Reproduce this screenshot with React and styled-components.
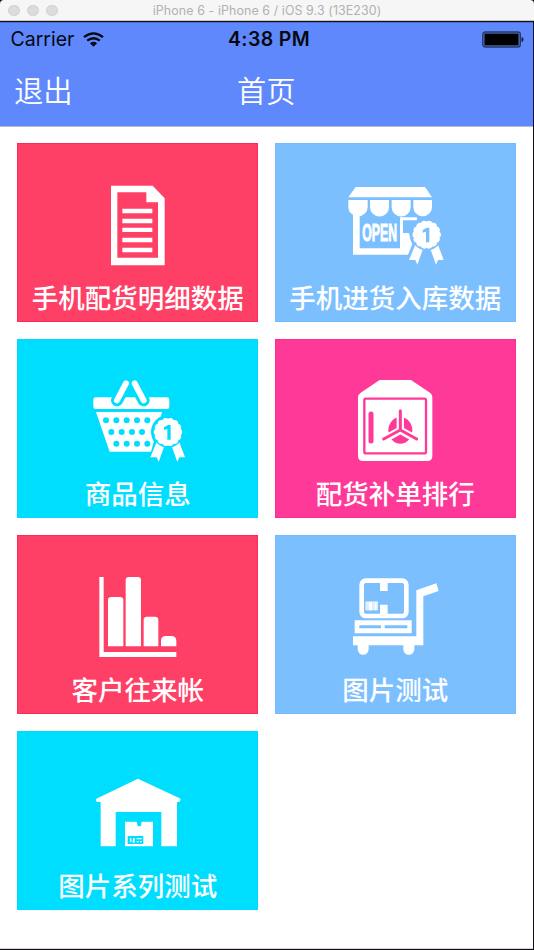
import React from "react";
import styled, { createGlobalStyle } from "styled-components";

const GlobalStyle = createGlobalStyle`
  * { box-sizing: border-box; }
  body { margin: 0; background: #fff; }
`;

const COLORS = {
  red: { fill: "#ff4066", edge: "#ff2a5c" },
  sky: { fill: "#7cbfff", edge: "#74baff" },
  cyan: { fill: "#00deff", edge: "#00daff" },
  pink: { fill: "#ff3998", edge: "#ff2c92" },
};

const Simulator = styled.div`
  display: flex;
  flex-direction: column;
  width: 534px;
  height: 950px;
  overflow: hidden;
  background: #15101c;
  font-family: Inter, "Noto Sans CJK SC", sans-serif;
`;

const WindowBar = styled.header`
  display: grid;
  grid-template-columns: 1fr auto 1fr;
  align-items: center;
  height: 21px;
  flex: none;
  padding: 0 8px;
  background: #f6f6f6;
  border-bottom: 1px solid #c4c4c4;
  border-radius: 4px 4px 0 0;
`;

const WindowButtons = styled.div`
  display: flex;
  gap: 7.5px;
`;

const WindowButton = styled.span`
  width: 11.5px;
  height: 11.5px;
  border-radius: 50%;
  background: #dcdcdc;
  border: 1px solid #d0d0d0;
`;

const WindowTitle = styled.span`
  font-size: 12.4px;
  line-height: 20px;
  padding-top: 1px;
  letter-spacing: 0.1px;
  color: #b1b1b1;
  white-space: pre;
`;

const Screen = styled.div`
  flex: 1;
  display: flex;
  flex-direction: column;
  margin: 1px 1.4px 1px 0;
  background: #fff;
  border-bottom: 1px solid #d4d4d4;
`;

const TopArea = styled.div`
  height: 105px;
  flex: none;
  background: #5e88fc;
  border-bottom: 1px solid #b5bcd2;
  border-top: 1px solid #4a6ccb;
`;

const StatusBar = styled.div`
  display: grid;
  grid-template-columns: 1fr auto 1fr;
  align-items: center;
  height: 33px;
  padding: 0 9px 0 10.5px;
  color: #06080f;
`;

const Carrier = styled.div`
  display: flex;
  align-items: center;
  gap: 9px;
  font-size: 19.5px;
  line-height: 33px;
  letter-spacing: 0;
`;

const Clock = styled.div`
  padding-left: 4px;
  font-size: 19.5px;
  line-height: 33px;
  font-weight: 600;
  letter-spacing: 0.35px;
`;

const BatterySlot = styled.div`
  display: flex;
  justify-content: flex-end;
`;

const NavBar = styled.nav`
  display: grid;
  grid-template-columns: 1fr auto 1fr;
  align-items: center;
  height: 67px;
  padding: 0 14px;
  color: #fff;
  font-family: "Noto Sans CJK SC", sans-serif;
  font-size: 29.3px;
  font-weight: 350;
  line-height: 67px;
`;

const NavButton = styled.button`
  justify-self: start;
  padding: 0;
  border: 0;
  background: none;
  color: inherit;
  font: inherit;
`;

const NavTitle = styled.h1`
  margin: 0;
  font: inherit;
`;

const TileGrid = styled.main`
  display: grid;
  grid-template-columns: repeat(2, 240.7px);
  grid-auto-rows: 179px;
  gap: 16.9px;
  padding: 16.2px 0 0 17.3px;
`;

const Tile = styled.section`
  display: flex;
  flex-direction: column;
  align-items: center;
  padding-top: 35px;
  border: 1px solid ${(p) => COLORS[p.$tone].edge};
  background: ${(p) => COLORS[p.$tone].fill};
  color: #fff;
`;

const TileLabel = styled.div`
  margin-top: 8px;
  font-family: "Noto Sans CJK SC", sans-serif;
  font-size: 26.5px;
  font-weight: 500;
  line-height: 40px;
  white-space: nowrap;
`;

const IconSvg = styled.svg`
  display: block;
  flex: none;
  width: 100px;
  height: 90px;
  fill: #fff;
`;

const rosette = (cx, cy, r) => {
  const petals = 14;
  const at = (i) => {
    const a = (i / petals) * Math.PI * 2 - Math.PI / 2;
    return `${(cx + r * Math.cos(a)).toFixed(1)} ${(cy + r * Math.sin(a)).toFixed(1)}`;
  };
  let d = `M${at(0)}`;
  for (let i = 1; i <= petals; i++) d += `A11 11 0 0 1 ${at(i)}`;
  return d + "Z";
};

const Medal = ({ x, y, bg }) => (
  <g transform={`translate(${x} ${y})`}>
    <circle r="51" fill={bg} />
    <path d="M-34 30-12 45-28 90-34 76-53 76ZM34 30 12 45 28 90 34 76 51 76Z" />
    <circle r="47" fill={bg} />
    <path d={rosette(0, 0, 39.5)} />
    <path d="M0-21H8V23H-2V-9L-12-6V-14Z" fill={bg} />
  </g>
);

const DocumentIcon = () => (
  <IconSvg viewBox="233 132 300 270">
    <path
      fillRule="evenodd"
      d="M302 152H427L463 190V391H302ZM321 172V368H443V202H408V172Z"
    />
    <path d="M336 221H426V235H336ZM336 251H426V265H336ZM336 278H426V291H336ZM336 308H426V322H336ZM336 338H426V352H336Z" />
  </IconSvg>
);

const ShopIcon = ({ bg }) => (
  <IconSvg viewBox="226 132 300 270">
    <path d="M258 156H466L487 187H236Z" />
    <path d="M236 195H294V216A29 28 0 0 1 236 216ZM301 195H358V216A28 28 0 0 1 301 216ZM366 195H423V216A28 28 0 0 1 366 216ZM431 195H487V216A28 28 0 0 1 431 216Z" />
    <path d="M250 234H270V340H391V247H442V256H400V294H418L429 325 415 359H250Z" />
    <text
      x="278"
      y="319"
      fontFamily="Liberation Sans"
      fontWeight="700"
      fontSize="74"
      textLength="104"
      lengthAdjust="spacingAndGlyphs"
      stroke="#fff"
      strokeWidth="3"
    >
      OPEN
    </text>
    <Medal x={471} y={299} bg={bg} />
  </IconSvg>
);

const BasketIcon = ({ bg }) => {
  const dots = [
    [271, [287, 318, 349, 380, 411]],
    [306, [303, 334, 365, 395]],
    [341, [318, 349, 380, 411]],
  ];
  return (
    <IconSvg viewBox="233 135 300 270">
      <rect x="249" y="202" width="228" height="35" rx="7" />
      <path d="M257 246H455L422 365H298Z" />
      <g fill="none" strokeLinecap="round">
        <path d="M347 160 320 211M373 160 400 211" stroke={bg} strokeWidth="36" />
        <path d="M347 160 320 211M373 160 400 211" stroke="#fff" strokeWidth="18" />
      </g>
      {dots.map(([y, xs]) => xs.map((x) => <circle key={`${x}-${y}`} cx={x} cy={y} r="9" fill={bg} />))}
      <Medal x={473} y={306} bg={bg} />
    </IconSvg>
  );
};

const SafeIcon = ({ bg }) => (
  <IconSvg viewBox="226 135 300 270">
    <path d="M330 150H424L481 188Q488 193 488 202V378Q488 393 473 393H280Q265 393 265 378V202Q265 193 273 188Z" />
    <rect x="284" y="206" width="185" height="164" rx="5" fill="none" stroke={bg} strokeWidth="7" />
    <g fill="none" stroke={bg} strokeLinecap="round">
      <path d="M304 252V333" strokeWidth="15" />
    </g>
    <ellipse cx="392" cy="301" rx="36" ry="40" fill={bg} />
    <path
      d="M392 301V226M392 301 334 333M392 301 450 333"
      stroke="#fff"
      strokeWidth="22"
      fill="none"
    />
    <path
      d="M392 300V242M392 300 342 327M392 300 441 327"
      stroke={bg}
      strokeWidth="9"
      strokeLinecap="round"
      fill="none"
    />
  </IconSvg>
);

const ChartIcon = () => (
  <IconSvg viewBox="233 123 300 270">
    <path d="M267 141H280V366H498V381H267Z" />
    <path d="M293 349V211Q293 201 303 201H329Q339 201 339 211V349ZM346 349V151Q346 141 356 141H382Q392 141 392 151V349ZM400 349V270Q400 260 410 260H434Q444 260 444 270V349ZM452 349V333Q452 318 467 318H483Q498 318 498 333V349Z" />
  </IconSvg>
);

const TrolleyIcon = () => (
  <IconSvg viewBox="226 123 300 270">
    <rect x="276" y="152" width="134" height="106" rx="12" fill="none" stroke="#fff" strokeWidth="14" />
    <path d="M331 152H354V183H331ZM331 224H354V256H331Z" />
    <path d="M287 214H325V241H287Z" opacity="0.75" />
    <path d="M298 217H307V241H298ZM316 217H320V241H316Z" />
    <path fillRule="evenodd" d="M255 271H426V310H255ZM269 286V295H334V286ZM345 286V295H413V286Z" />
    <path d="M250 319H440V181L500 160 507 183 461 199V346H250Z" />
    <path d="M264 340H297V358A16.500 16.500 0 0 1 264 358ZM401 340H434V358A16.500 16.500 0 0 1 401 358Z" />
  </IconSvg>
);

const WarehouseIcon = ({ bg }) => (
  <IconSvg viewBox="263 125 300 270">
    <path d="M413 160 538 219Q542 222 540 226L537 230H530V363H483V260H346V363H301V230H290Q285 226 288 220Z" />
    <path d="M374 289H409L412 303H421L424 289H458V363H374Z" />
    <path
      fill={bg}
      fillRule="evenodd"
      d="M382 332H429V356H382ZM389 338V350H393V338ZM397 345V352H403V338H400ZM409 338V342H424V338ZM409 347V351H415V347ZM419 347V351H424V347Z"
    />
  </IconSvg>
);

const WifiIcon = () => (
  <svg width="21" height="15" viewBox="0 0 21 15" fill="none" stroke="#06080f" strokeWidth="2.3">
    <path d="M1 5.200Q10.500-2.400 20 5.200M4.200 8.700Q10.500 3.700 16.800 8.700" />
    <path d="M6.900 11.200Q10.500 8.300 14.100 11.200L10.500 14.800Z" fill="#06080f" stroke="none" />
  </svg>
);

const BatteryIcon = () => (
  <svg width="42" height="17" viewBox="0 0 42 17">
    <rect x="0.800" y="1" width="37.500" height="15" rx="2.500" fill="#5279df" stroke="#273963" strokeWidth="1.400" />
    <rect x="2.500" y="2.600" width="34" height="11.800" fill="#000" />
    <path d="M39.500 6Q41.500 6 41.500 8.500 41.500 11 39.500 11Z" fill="#14203d" />
  </svg>
);

const TILES = [
  { label: "手机配货明细数据", tone: "red", Icon: DocumentIcon },
  { label: "手机进货入库数据", tone: "sky", Icon: ShopIcon },
  { label: "商品信息", tone: "cyan", Icon: BasketIcon },
  { label: "配货补单排行", tone: "pink", Icon: SafeIcon },
  { label: "客户往来帐", tone: "red", Icon: ChartIcon },
  { label: "图片测试", tone: "sky", Icon: TrolleyIcon },
  { label: "图片系列测试", tone: "cyan", Icon: WarehouseIcon },
];

export default function App() {
  return (
    <>
      <GlobalStyle />
      <Simulator>
        <WindowBar>
          <WindowButtons>
            <WindowButton />
            <WindowButton />
            <WindowButton />
          </WindowButtons>
          <WindowTitle>iPhone 6 - iPhone 6 / iOS 9.3 (13E230)</WindowTitle>
        </WindowBar>
        <Screen>
          <TopArea>
            <StatusBar>
              <Carrier>
                Carrier <WifiIcon />
              </Carrier>
              <Clock>4:38 PM</Clock>
              <BatterySlot>
                <BatteryIcon />
              </BatterySlot>
            </StatusBar>
            <NavBar>
              <NavButton>退出</NavButton>
              <NavTitle>首页</NavTitle>
            </NavBar>
          </TopArea>
          <TileGrid>
            {TILES.map(({ label, tone, Icon }) => (
              <Tile key={label} $tone={tone}>
                <Icon bg={COLORS[tone].fill} />
                <TileLabel>{label}</TileLabel>
              </Tile>
            ))}
          </TileGrid>
        </Screen>
      </Simulator>
    </>
  );
}
